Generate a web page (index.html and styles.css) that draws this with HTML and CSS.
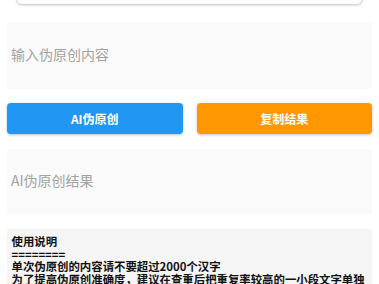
FILE: index.html
```html
<!DOCTYPE html>
<html lang="zh-CN">
<head>
<meta charset="utf-8">
<link rel="stylesheet" href="styles.css">
</head>
<body>
<div class="page">
  <div class="top-card"></div>
  <div class="field input-field">
    <span class="placeholder">输入伪原创内容</span>
  </div>
  <div class="actions">
    <button class="btn btn-blue">AI伪原创</button>
    <button class="btn btn-orange">复制结果</button>
  </div>
  <div class="field result-field">
    <span class="placeholder">AI伪原创结果</span>
  </div>
  <div class="help">
    <div class="line">使用说明</div>
    <div class="line">========</div>
    <div class="line">单次伪原创的内容请不要超过2000个汉字</div>
    <div class="line">为了提高伪原创准确度，建议在查重后把重复率较高的一小段文字单独</div>
  </div>
</div>
</body>
</html>
```

FILE: styles.css
```css
html, body {
  margin: 0;
  padding: 0;
  background: #ffffff;
  overflow: hidden;
}

body {
  font-family: "Noto Sans CJK SC", "Noto Sans", sans-serif;
}

.page {
  display: flex;
  flex-direction: column;
  padding: 0 7px;
}

.top-card {
  height: 20px;
  margin: -17px 9px 0 9px;
  border: 1px solid #d4d4d4;
  border-radius: 6px;
  background: #fdfdfd;
  box-shadow: 0 1px 2px rgba(0, 0, 0, 0.12);
}

.field {
  background: #fafafa;
  border-radius: 3px;
  display: flex;
  align-items: center;
  padding: 0 4px 3px 4px;
}

.input-field {
  margin-top: 17px;
  height: 64px;
}

.result-field {
  margin-top: 15px;
  height: 62px;
}

.placeholder {
  font-size: 14px;
  color: #a3a3a3;
  line-height: 1;
}

.actions {
  display: flex;
  gap: 14px;
  margin-top: 14px;
}

.btn {
  flex: 1;
  height: 31px;
  border: none;
  border-radius: 4px;
  color: #ffffff;
  font-family: "Noto Sans CJK SC", "Noto Sans", sans-serif;
  font-weight: 700;
  font-size: 12px;
  box-shadow: 0 1px 3px rgba(0, 0, 0, 0.25);
  padding: 0;
}

.btn-blue {
  background: #2196f3;
}

.btn-orange {
  background: #ff9800;
}

.help {
  margin-top: 15px;
  background: #f5f5f5;
  border-radius: 3px;
  padding: 6px 4px 10px 4.5px;
  font-size: 11.4px;
  line-height: 12.5px;
  font-weight: 700;
  color: #111111;
}

.line {
  white-space: nowrap;
}
```
